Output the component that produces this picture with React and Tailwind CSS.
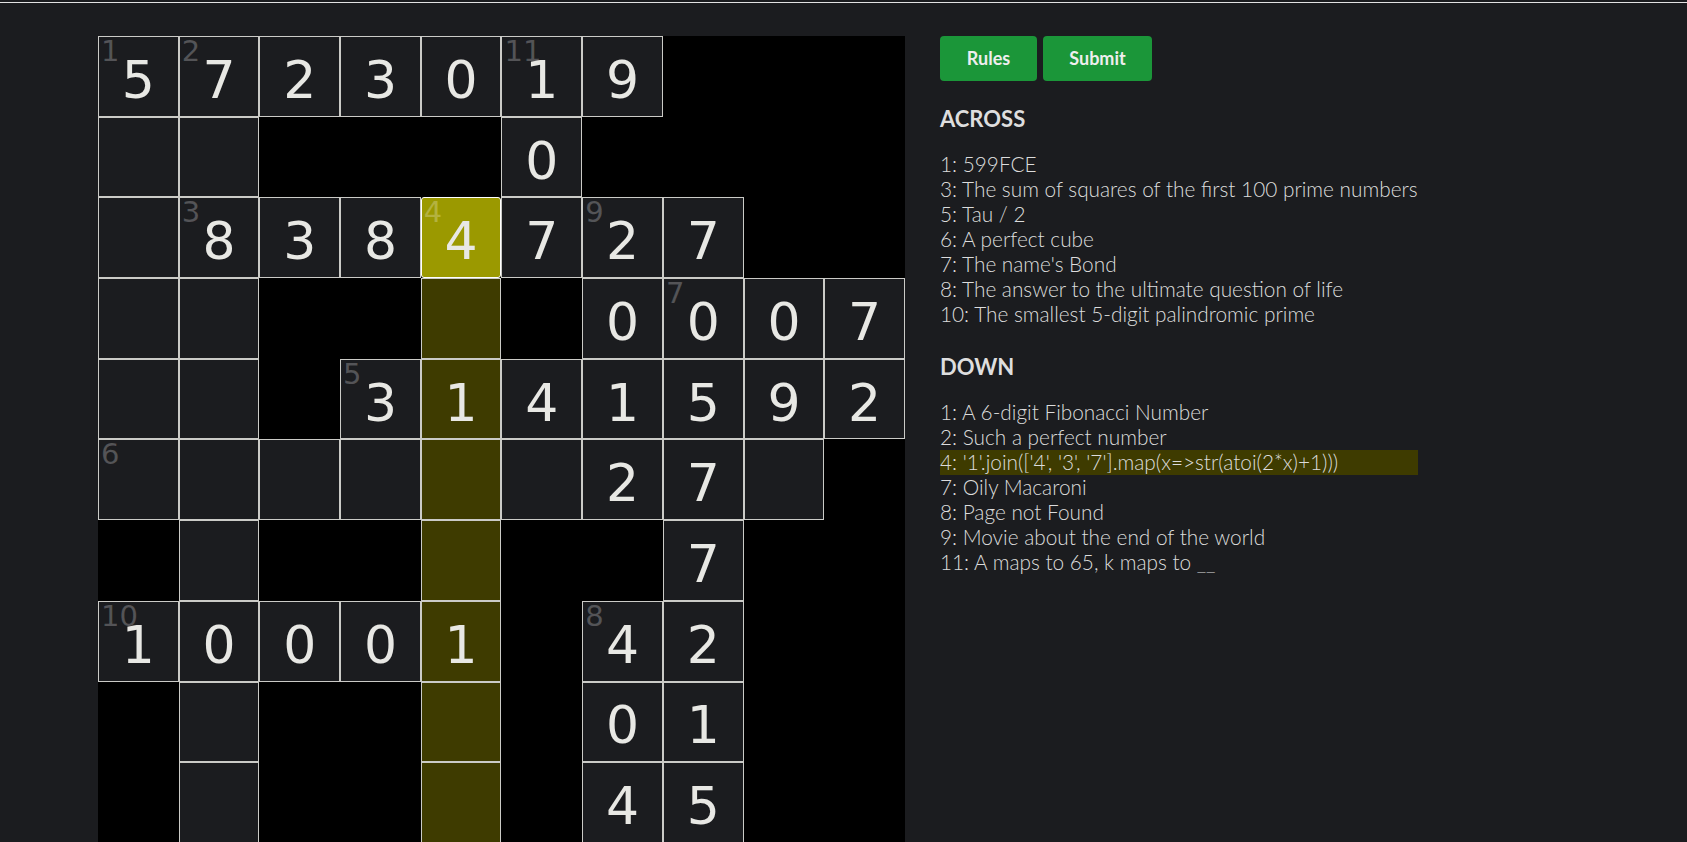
import React from "react";

// # = black square, . = empty white square, digit = filled answer
const GRID = [
  "5723019###",
  "..###0####",
  ".8384727##",
  "..##.#0007",
  "..#3141592",
  "......27.#",
  "#.##.##7##",
  "10001#42##",
  "#.##.#01##",
  "#.##.#45##",
];

const LABELS = {
  "0,0": 1,
  "0,1": 2,
  "0,5": 11,
  "2,1": 3,
  "2,4": 4,
  "2,6": 9,
  "3,7": 7,
  "4,3": 5,
  "5,0": 6,
  "7,0": 10,
  "7,6": 8,
};

const SELECTED = "2,4";
const ACTIVE_COL = 4;
const ACTIVE_ROWS = [2, 9];

const ACROSS = [
  "1: 599FCE",
  "3: The sum of squares of the first 100 prime numbers",
  "5: Tau / 2",
  "6: A perfect cube",
  "7: The name's Bond",
  "8: The answer to the ultimate question of life",
  "10: The smallest 5-digit palindromic prime",
];

const DOWN = [
  "1: A 6-digit Fibonacci Number",
  "2: Such a perfect number",
  "4: '1'.join(['4', '3', '7'].map(x=>str(atoi(2*x)+1)))",
  "7: Oily Macaroni",
  "8: Page not Found",
  "9: Movie about the end of the world",
  "11: A maps to 65, k maps to __",
];

const Cell = ({ r, c, ch }) => {
  if (ch === "#") return <div className="bg-black" />;

  const key = `${r},${c}`;
  const label = LABELS[key];
  const selected = key === SELECTED;
  const active = c === ACTIVE_COL && r >= ACTIVE_ROWS[0] && r <= ACTIVE_ROWS[1];

  let look = "bg-[#1b1c1f] border-[#cbcbc7]";
  if (selected) look = "bg-[#9b9900] border-white rounded-[3px]";
  else if (active) look = "bg-[#3e3b00] border-[#cbcbc7]";

  return (
    <div className={`relative border flex items-center justify-center pt-[7px] ${look}`}>
      {label && (
        <span className="absolute top-0 left-[2px] text-[29px] leading-none text-white/25">
          {label}
        </span>
      )}
      {ch !== "." && (
        <span className="text-[52px] leading-none text-[#e8e8e4]">{ch}</span>
      )}
    </div>
  );
};

const ClueList = ({ title, clues, activeIndex, first }) => (
  <div>
    <h3
      className={`text-[22px] font-bold text-[#dedede] leading-[1.2] mb-[20px] ${first ? "mt-[25px]" : "mt-[27px]"}`}
    >
      {title}
    </h3>
    {clues.map((clue, i) => (
      <div
        key={clue}
        className={`text-[20.8px] font-light leading-[1.2] whitespace-pre text-[#dcdcdc] ${i === activeIndex ? "bg-[#3e3b00]" : ""}`}
      >
        {clue}
      </div>
    ))}
  </div>
);

export default function App() {
  return (
    <div className="min-h-screen bg-[#1b1c1f] overflow-hidden" style={{ fontFamily: "Lato, 'Open Sans', sans-serif" }}>
      <div className="pt-[2px]">
        <div className="h-px bg-[#e2e2e2]" />
      </div>

      <div className="flex pl-[98px] pt-[33px] gap-[35px]">
        {/* GRID */}
        <div
          className="grid grid-cols-10 grid-rows-10 w-[807px] h-[807px] bg-black shrink-0"
          style={{ fontFamily: "'DejaVu Sans', sans-serif" }}
        >
          {GRID.map((row, r) =>
            row.split("").map((ch, c) => <Cell key={`${r}-${c}`} r={r} c={c} ch={ch} />)
          )}
        </div>

        {/* CLUES */}
        <div className="w-fit">
          <div className="flex gap-[6px]">
            <button className="h-[45px] w-[97px] rounded-[4px] bg-[#1b9639] text-[18px] font-bold text-[#eeeeee]">
              Rules
            </button>
            <button className="h-[45px] w-[109px] rounded-[4px] bg-[#1b9639] text-[18px] font-bold text-[#eeeeee]">
              Submit
            </button>
          </div>
          <ClueList title="ACROSS" clues={ACROSS} activeIndex={-1} first />
          <ClueList title="DOWN" clues={DOWN} activeIndex={2} />
        </div>
      </div>
    </div>
  );
}
